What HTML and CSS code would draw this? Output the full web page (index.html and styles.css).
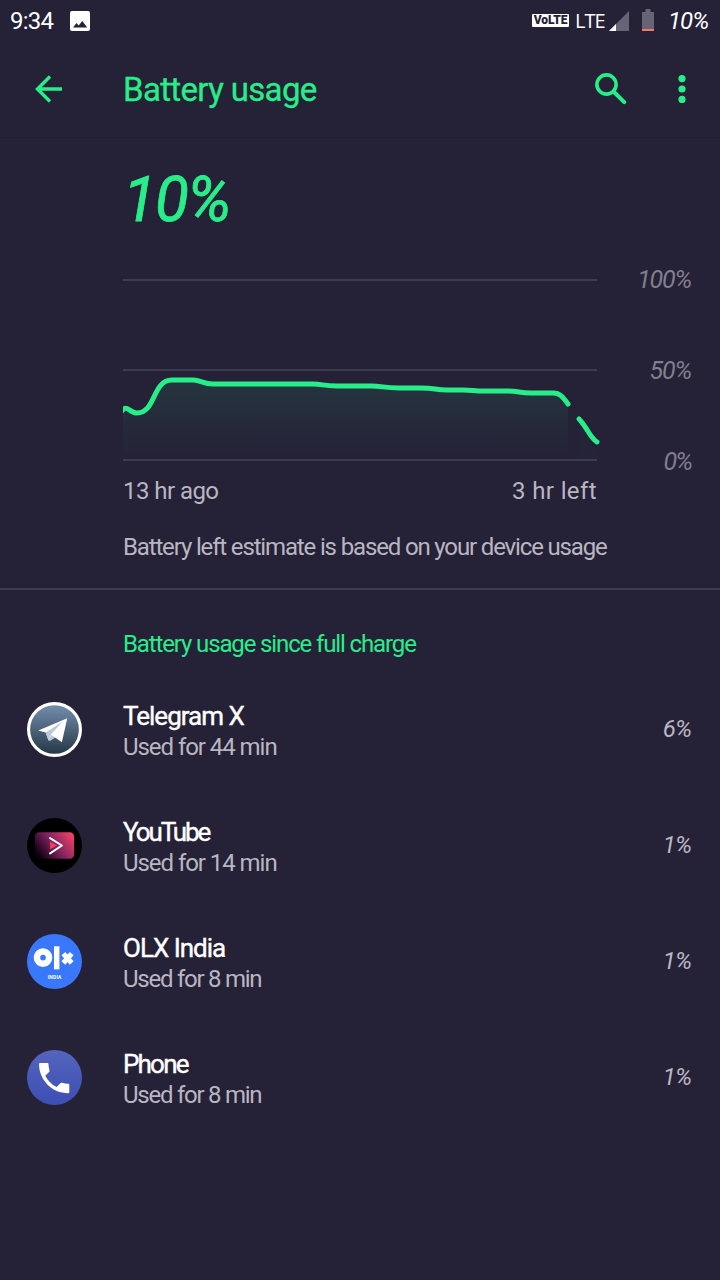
FILE: index.html
```html
<!DOCTYPE html>
<html lang="en">
<head>
<meta charset="utf-8">
<title>Battery usage</title>
<link rel="stylesheet" href="styles.css">
</head>
<body>
<header class="status">
  <span class="clock">9:34</span>
  <svg class="picture" width="20" height="20" viewBox="0 0 20 20"><rect width="20" height="20" rx="2" fill="#fff"/><path d="M3 16.5 6.5 12l2.2 2.6L12.3 10l4.9 6.5z" fill="#252137"/></svg>
  <span class="volte">VoLTE</span>
  <span class="lte">LTE</span>
  <svg class="signal" width="20" height="20" viewBox="0 0 20 20"><path d="M0 20 20 0v20z" fill="#686477"/><path d="M0 20 7 13v7z" fill="#fff"/></svg>
  <svg class="battery" width="12" height="22" viewBox="0 0 12 22"><path d="M3.5 0h5v3H12v17H0V3h3.5z" fill="#686477"/><path d="M0 20h12v2H0z" fill="#f27a60"/></svg>
  <span class="charge">10%</span>
</header>
<nav class="appbar">
  <svg class="back" width="28" height="28" viewBox="0 0 28 28" fill="none" stroke="#28ee8a" stroke-width="3.4"><path d="M27 14H3M15 1.5 2.5 14 15 26.5"/></svg>
  <h1 class="title">Battery usage</h1>
  <svg class="search" width="32" height="32" viewBox="0 0 32 32" fill="none" stroke="#28ee8a"><circle cx="11.5" cy="11.5" r="9.6" stroke-width="3.6"/><path d="m19 19 10.2 10.2" stroke-width="4" stroke-linecap="round"/></svg>
  <svg class="more" width="8" height="28" viewBox="0 0 8 28" fill="#28ee8a"><circle cx="4" cy="3.6" r="3.6"/><circle cx="4" cy="14" r="3.6"/><circle cx="4" cy="24.4" r="3.6"/></svg>
</nav>
<main>
  <section class="summary">
    <p class="level">10%</p>
    <div class="graph">
      <svg class="plot" width="480" height="184" viewBox="0 0 480 184">
        <defs><linearGradient id="fade" x1="0" y1="102" x2="0" y2="182" gradientUnits="userSpaceOnUse"><stop stop-color="#28ee8a" stop-opacity=".1"/><stop offset="1" stop-color="#28ee8a" stop-opacity="0"/></linearGradient>
        <clipPath id="edge"><path d="M0 0h480v184H0z"/></clipPath></defs>
        <path d="M0 2h474M0 92h474M0 182h474" stroke="#3e3a4f" stroke-width="2"/>
        <path d="M0 132C4 128 6 135 14 135C33 135 29 102 49 102H70C78 102 80 106 90 106H190C200 106 200 108 214 108H248C260 108 260 110 276 110H298C312 110 312 112 324 112H340C350 112 350 113 362 113H384C396 113 396 115 408 115H430C437 115 440 119 445 126V182H0z" fill="url(#fade)"/>
        <path d="M456 142 474 165V182H456z" fill="#28ee8a" opacity=".012"/>
        <g fill="none" stroke="#28ee8a" stroke-width="5" stroke-linecap="round" clip-path="url(#edge)">
          <path d="M-2 134C4 125 6 135 14 135C33 135 29 102 49 102H70C78 102 80 106 90 106H190C200 106 200 108 214 108H248C260 108 260 110 276 110H298C312 110 312 112 324 112H340C350 112 350 113 362 113H384C396 113 396 115 408 115H430C437 115 440 119 445 126"/>
          <path d="M456 141C464 149 467 160 474 164"/>
        </g>
      </svg>
      <div class="scale"><span>100%</span><span>50%</span><span class="zero">0%</span></div>
    </div>
    <div class="range"><span class="ago">13 hr ago</span><span class="left">3 hr left</span></div>
    <p class="estimate">Battery left estimate is based on your device usage</p>
  </section>
  <section class="apps">
    <h2 class="heading">Battery usage since full charge</h2>
    <div class="app">
      <svg class="icon" viewBox="0 0 56 56"><defs><linearGradient id="tg" x2="0" y2="1"><stop stop-color="#7590b0"/><stop offset="1" stop-color="#233644"/></linearGradient></defs><circle cx="28" cy="28" r="26.4" fill="url(#tg)" stroke="#fff" stroke-width="3.2"/><path d="m20 30 3 10 9-6z" fill="#b5c8d9"/><path d="M11.5 29 41 16.5 35.5 41 25 33.5 22 39.5 19 31z" fill="#fff"/><path d="M19 31 36 20 24.5 33 22 39.5z" fill="#b9cad8"/></svg>
      <div class="info"><h3 class="name telegram">Telegram X</h3><p class="used">Used for 44 min</p></div><span class="share">6%</span>
    </div>
    <div class="app">
      <svg class="icon" viewBox="0 0 56 56"><defs><linearGradient id="yt" x1="0" y1=".7" x2="1" y2=".2"><stop stop-color="#0b0010"/><stop offset=".5" stop-color="#832361"/><stop offset="1" stop-color="#ed4164"/></linearGradient></defs><circle cx="28" cy="28" r="28"/><rect x="8" y="14.5" width="40" height="27" rx="4.5" fill="url(#yt)"/><path d="m23.5 24 7 4-7 4z" fill="#ed3f60"/><path d="m23.5 20.5 12 7.5-12 8" fill="none" stroke="#fff" stroke-width="2" stroke-linecap="round" stroke-linejoin="round"/></svg>
      <div class="info"><h3 class="name youtube">YouTube</h3><p class="used">Used for 14 min</p></div><span class="share">1%</span>
    </div>
    <div class="app">
      <svg class="icon" viewBox="0 0 56 56"><circle cx="28" cy="28" r="28" fill="#3a78fb"/><circle cx="16.3" cy="24" r="6.2" fill="none" stroke="#fff" stroke-width="6.6"/><path d="M27.5 12.5h5.5v23.5h-5.5z" fill="#fff"/><path d="m37 20 8.5 9.5m0-9.5L37 29.5" stroke="#fff" stroke-width="5.2"/><text class="country" x="28" y="45.5" text-anchor="middle" textLength="14">INDIA</text></svg>
      <div class="info"><h3 class="name olx">OLX India</h3><p class="used short">Used for 8 min</p></div><span class="share">1%</span>
    </div>
    <div class="app">
      <svg class="icon" viewBox="0 0 56 56"><defs><linearGradient id="ph" x1="1" y2="1"><stop stop-color="#5464bd"/><stop offset="1" stop-color="#3c4fb3"/></linearGradient></defs><circle cx="28" cy="28" r="28" fill="url(#ph)"/><path transform="translate(7 7.3) scale(1.75)" d="M6.62 10.79c1.44 2.83 3.76 5.14 6.59 6.59l2.2-2.2c.27-.27.67-.36 1.02-.24 1.12.37 2.33.57 3.57.57.3 0 .6.2.6.6V20.4c0 .3-.3.6-.6.6-9.39 0-17-7.61-17-17 0-.3.3-.6.6-.6h4.3c.3 0 .6.3.6.6 0 1.25.2 2.45.57 3.57.11.35.03.74-.25 1.02z" fill="#fff"/></svg>
      <div class="info"><h3 class="name phone">Phone</h3><p class="used short">Used for 8 min</p></div><span class="share">1%</span>
    </div>
  </section>
</main>
</body>
</html>
```
FILE: styles.css
```css
* { box-sizing: border-box; }
body { margin: 0; width: 720px; height: 1280px; overflow: hidden; background: #252137; color: #b9b6c1; font-family: Roboto, "Liberation Sans", sans-serif; white-space: nowrap; }
h1, h2, h3, p { margin: 0; font-weight: 400; }
svg { display: block; flex-shrink: 0; }
.status { display: flex; align-items: center; height: 41px; padding-left: 10px; color: #fff; }
.clock { width: 60px; font-size: 24px; letter-spacing: -.8px; }
.volte { width: 37px; height: 13px; margin-left: 442px; border-radius: 1px; background: #fff; color: #252137; font: 900 12px/13px Roboto, sans-serif; letter-spacing: -.1px; text-align: center; }
.lte { width: 29px; margin-left: 6px; font: 20px "Open Sans", sans-serif; letter-spacing: -1px; }
.signal { margin-left: 5px; }
.battery { margin: -1px 0 0 13px; }
.charge { margin-left: 14px; font-size: 24px; font-style: italic; letter-spacing: -1px; }
.appbar { display: flex; align-items: center; height: 97px; border-bottom: 1px solid #211e31; padding: 0 34px 0 35px; }
.title { flex: 1; margin-left: 60px; padding-top: 1px; color: #28ee8a; font-size: 33px; line-height: 40px; letter-spacing: -.65px; -webkit-text-stroke: .3px; }
.more { margin-left: 51px; }
.summary { height: 452px; padding: 28px 29px 0 123px; border-bottom: 2px solid #3e3a4f; }
.level { height: 68px; color: #28ee8a; font-size: 62px; line-height: 68px; font-style: italic; letter-spacing: -1.7px; -webkit-text-stroke: .8px; }
.graph { display: flex; justify-content: space-between; height: 184px; margin-top: 44px; }
.scale { display: flex; flex-direction: column; justify-content: space-between; align-items: flex-end; height: 206px; margin-top: -10px; color: #827f8d; font-size: 25px; line-height: 24px; font-style: italic; letter-spacing: -1.2px; }
.zero { letter-spacing: -2px; }
.range { display: flex; justify-content: space-between; width: 474px; margin-top: 17px; font-size: 24px; line-height: 24px; }
.ago { letter-spacing: -.55px; }
.left { letter-spacing: .4px; }
.estimate { margin-top: 32px; font-size: 24px; line-height: 24px; letter-spacing: -1.15px; }
.apps { padding: 42px 29px 0 27px; }
.heading { margin-left: 96px; color: #28ee8a; font-size: 24px; line-height: 24px; letter-spacing: -1.13px; }
.app { display: flex; align-items: center; height: 116px; }
.heading + .app { margin-top: 15px; }
.icon { width: 55px; height: 55px; }
.info { flex: 1; margin-left: 41px; padding-top: 5px; }
.name { color: #fff; font-size: 26px; line-height: 31px; -webkit-text-stroke: .4px #fff; }
.telegram, .olx { letter-spacing: -1px; }
.youtube { letter-spacing: -2.1px; }
.phone { letter-spacing: -1.8px; }
.used { font-size: 24px; line-height: 31px; letter-spacing: -1.05px; }
.short { letter-spacing: -1.25px; }
.share { font-size: 24px; font-style: italic; letter-spacing: -1px; }
.country { fill: #fff; font: 700 5px Roboto, sans-serif; }
```
